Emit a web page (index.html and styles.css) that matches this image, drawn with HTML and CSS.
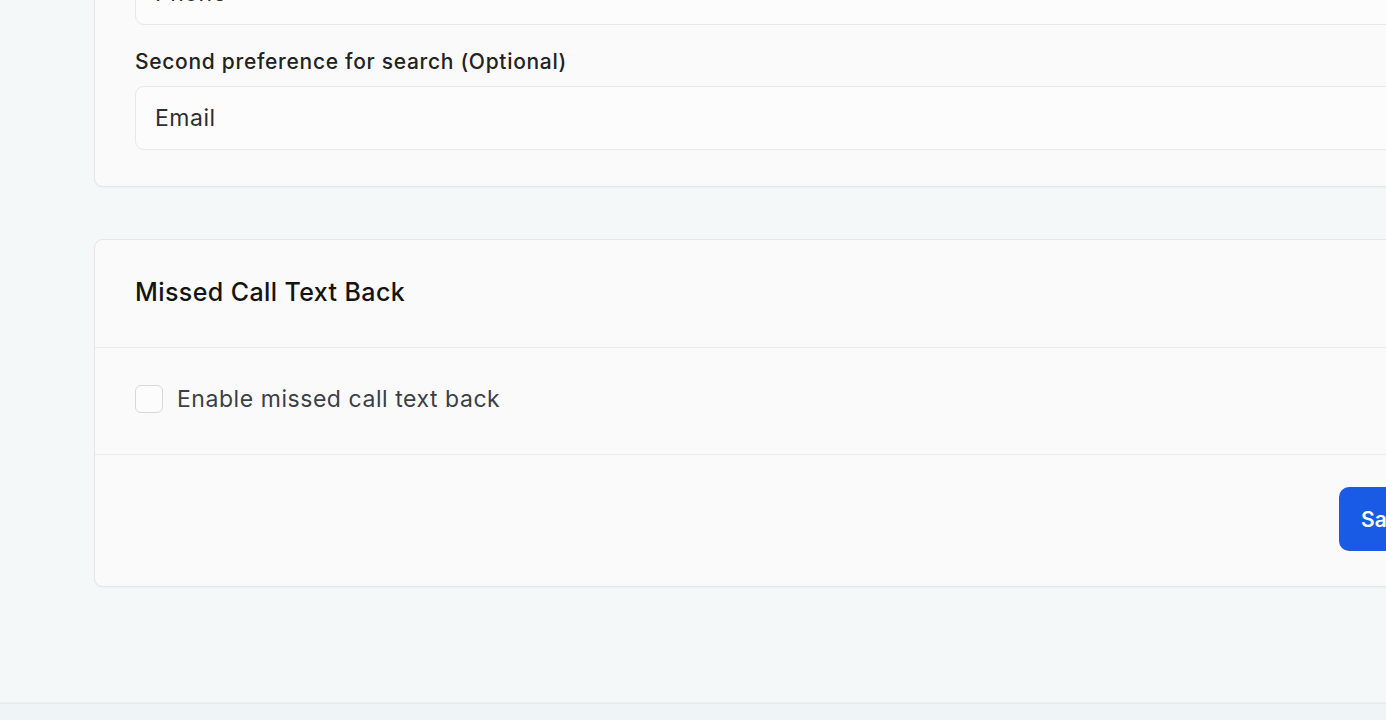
FILE: index.html
```html
<!DOCTYPE html>
<html lang="en">
<head>
<meta charset="utf-8">
<title>Settings</title>
<link rel="stylesheet" href="styles.css">
</head>
<body>
<div class="page">
  <main class="content">
    <section class="card card-search">
      <div class="field">
        <label class="field-label">First preference for search</label>
        <div class="select">Phone</div>
      </div>
      <div class="field">
        <label class="field-label">Second preference for search (Optional)</label>
        <div class="select">Email</div>
      </div>
    </section>

    <section class="card card-missed">
      <header class="card-header">
        <h2 class="card-title">Missed Call Text Back</h2>
      </header>
      <div class="card-body">
        <label class="check-row">
          <span class="checkbox"></span>
          <span class="check-text">Enable missed call text back</span>
        </label>
      </div>
      <footer class="card-footer">
        <button class="btn-primary">Save</button>
      </footer>
    </section>
  </main>
  <div class="bottom-bar"></div>
</div>
</body>
</html>
```

FILE: styles.css
```css
* { box-sizing: border-box; }
html, body {
  margin: 0;
  padding: 0;
  height: 720px;
  overflow: hidden;
  background: #f4f8f9;
  font-family: Inter, "Noto Sans", "Liberation Sans", sans-serif;
  color: #1c1c1e;
}
.page {
  width: 1386px;
  height: 720px;
  overflow: hidden;
  display: flex;
  flex-direction: column;
}
.content {
  flex: 1;
  padding-left: 94px;
  margin-top: -112px;
  display: flex;
  flex-direction: column;
  gap: 52px;
  width: 1490px;
  flex-shrink: 0;
}
.card {
  background: #fafafa;
  border: 1px solid #e4e7e8;
  border-radius: 9px;
  box-shadow: 0 1px 2px rgba(0,0,0,0.04);
}
.card-search {
  padding: 36px 40px 36px 40px;
  display: flex;
  flex-direction: column;
  gap: 25px;
}
.field {
  display: flex;
  flex-direction: column;
  gap: 12px;
}
.field-label {
  font-size: 21px;
  line-height: 24px;
  font-weight: 500;
  letter-spacing: 0.7px;
  color: #222222;
}
.select {
  height: 64px;
  border: 1px solid #e6e8e9;
  border-radius: 9px;
  background: #fcfcfc;
  padding: 0 19px;
  display: flex;
  align-items: center;
  font-size: 23px;
  letter-spacing: 0.5px;
  color: #2e2e2e;
}
.card-header {
  height: 108px;
  padding: 0 40px 4px;
  display: flex;
  align-items: center;
  border-bottom: 1px solid #e8eaeb;
}
.card-title {
  margin: 0;
  font-size: 25px;
  font-weight: 500;
  letter-spacing: 0.4px;
  color: #141414;
}
.card-body {
  height: 107px;
  padding: 0 40px 4px;
  display: flex;
  align-items: center;
  border-bottom: 1px solid #eaeced;
}
.check-row {
  display: flex;
  align-items: center;
  gap: 14px;
}
.checkbox {
  width: 28px;
  height: 28px;
  border: 1.5px solid #d6d8da;
  border-radius: 6px;
  background: #fcfcfc;
}
.check-text {
  font-size: 23px;
  letter-spacing: 0.55px;
  color: #3b3f46;
}
.card-footer {
  padding: 32px 40px 35px;
  display: flex;
  justify-content: flex-end;
}
.btn-primary {
  height: 64px;
  width: 110px;
  padding: 0 22px;
  border: none;
  border-radius: 10px;
  background: #1a5be6;
  color: #fff;
  font-family: inherit;
  font-size: 21px;
  font-weight: 600;
  text-align: left;
}
.bottom-bar {
  height: 17px;
  flex: none;
  background: #eff5f6;
  border-top: 1px solid #e6ebec;
  box-shadow: 0 -1px 2px rgba(0,0,0,0.03);
}
```
